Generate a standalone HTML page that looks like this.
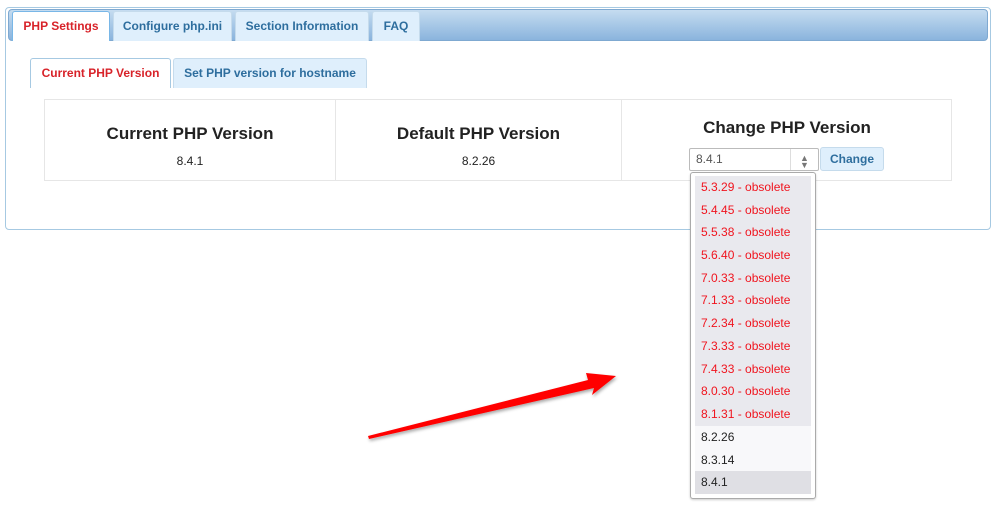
<!DOCTYPE html>
<html><head><style>
body{margin:0;width:1000px;height:510px;background:#fff;font-family:"Liberation Sans",Arial,sans-serif;position:relative;overflow:hidden}
.a{position:absolute;box-sizing:border-box}
.panel{left:5px;top:7px;width:986px;height:223px;border:1px solid #a6c9e2;border-radius:4px;background:#fff}
.bar{left:8px;top:9px;width:980px;height:32px;border:1px solid #7fa9d1;border-radius:4px;background:linear-gradient(#c5dcf0,#8ab4dd)}
.tab{top:11px;height:30px;background:#dfeffc;border:1px solid #c5dbec;border-bottom:none;border-radius:3px 3px 0 0;font-size:12px;font-weight:bold;color:#2e6e9e;text-align:center;line-height:28px}
.tab.on{background:#fff;color:#d8232a;border-color:#79b7e7}
.st{top:58px;height:30px;font-size:12px;font-weight:bold;color:#2e6e9e;text-align:center;line-height:29px;background:#dfeffc;border:1px solid #c5dbec;border-bottom:none;border-radius:3px 3px 0 0}
.st.on{background:#fff;color:#d8232a;border-color:#a6c9e2}
.tbl{left:44px;top:99px;width:908px;height:82px;border:1px solid #e6e6e6}
.col{top:0;height:80px;text-align:center}
h2{margin:0;font-size:17px;font-weight:bold;color:#222}
.v{font-size:12px;color:#222;margin-top:10px}
.dd{left:690px;top:172px;width:126px;height:327px;border:1px solid #aaa;border-radius:3px;background:#fff;box-shadow:0 1px 2px rgba(0,0,0,.2)}
.obbg{position:absolute;left:4px;top:3px;width:116px;height:250px;background:#e9e9ee}
.it{position:absolute;left:4px;width:116px;height:23px;line-height:23px;font-size:12px;padding-left:6px;box-sizing:border-box;color:#222}
.ob{color:#f0141e}
</style></head><body>
<div class="a panel"></div>
<div class="a bar"></div>
<div class="a tab on" style="left:12px;width:98px">PHP Settings</div>
<div class="a tab" style="left:113px;width:119px">Configure php.ini</div>
<div class="a tab" style="left:235px;width:134px">Section Information</div>
<div class="a tab" style="left:372px;width:48px">FAQ</div>
<div class="a st on" style="left:30px;width:141px">Current PHP Version</div>
<div class="a st" style="left:173px;width:194px">Set PHP version for hostname</div>
<div class="a tbl">
<div class="a col" style="left:0;width:291px;border-right:1px solid #e6e6e6;padding-top:24px"><h2>Current PHP Version</h2><div class="v">8.4.1</div></div>
<div class="a col" style="left:291px;width:286px;border-right:1px solid #e6e6e6;padding-top:24px"><h2>Default PHP Version</h2><div class="v">8.2.26</div></div>
<div class="a col" style="left:577px;width:330px;padding-top:18px"><h2>Change PHP Version</h2></div>
</div>
<div class="a" style="left:689px;top:148px;width:130px;height:23px;border:1px solid #bbb;border-radius:2px;background:#fff;font-size:12px;color:#555;line-height:21px;padding-left:6px">8.4.1<span style="position:absolute;left:100px;top:0;width:1px;height:21px;background:#ddd"></span><span style="position:absolute;left:110px;top:-1px;font-size:9px;color:#777">&#9650;</span><span style="position:absolute;left:110px;top:6px;font-size:9px;color:#777">&#9660;</span></div>
<div class="a" style="left:820px;top:147px;width:64px;height:24px;background:#dfeffc;border:1px solid #c5dbec;border-radius:3px;font-size:12px;font-weight:bold;color:#2e6e9e;text-align:center;line-height:22px">Change</div>
<div class="a dd">
<div class="obbg"></div>
<div class="it ob" style="top:3px">5.3.29 - obsolete</div>
<div class="it ob" style="top:26px">5.4.45 - obsolete</div>
<div class="it ob" style="top:48px">5.5.38 - obsolete</div>
<div class="it ob" style="top:71px">5.6.40 - obsolete</div>
<div class="it ob" style="top:94px">7.0.33 - obsolete</div>
<div class="it ob" style="top:116px">7.1.33 - obsolete</div>
<div class="it ob" style="top:139px">7.2.34 - obsolete</div>
<div class="it ob" style="top:162px">7.3.33 - obsolete</div>
<div class="it ob" style="top:185px">7.4.33 - obsolete</div>
<div class="it ob" style="top:207px">8.0.30 - obsolete</div>
<div class="it ob" style="top:230px">8.1.31 - obsolete</div>
<div class="it" style="top:253px;background:#f8f8fa">8.2.26</div>
<div class="it" style="top:276px;background:#f8f8fa">8.3.14</div>
<div class="it" style="top:298px;background:#dfdfe4">8.4.1</div>
</div>
<svg class="a" style="left:0;top:0" width="1000" height="510"><defs><filter id="s"><feDropShadow dx="1" dy="2" stdDeviation="1.5" flood-opacity="0.35"/></filter></defs>
<path d="M368 436 L369 439 L594 388 L592 395 L616 376 L586 373 L588 380 Z" fill="#f00" filter="url(#s)"/></svg>
</body></html>
